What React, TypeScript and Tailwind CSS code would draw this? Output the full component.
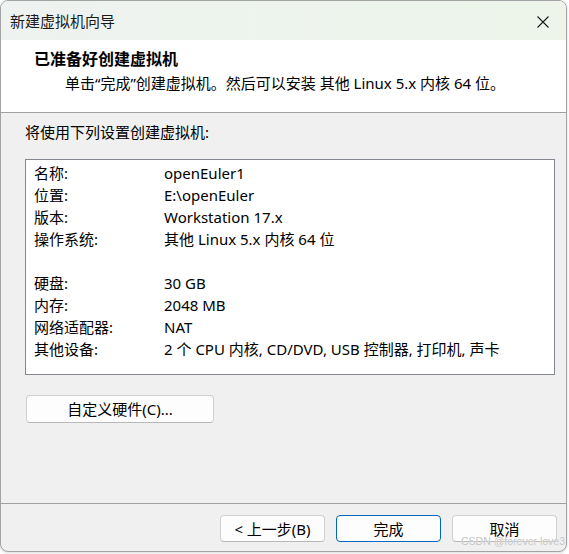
import React from "react";

const font = { fontFamily: '"Noto Sans", "Noto Sans CJK SC", sans-serif' };

const rows: [string, string][] = [
  ["名称:", "openEuler1"],
  ["位置:", "E:\\openEuler"],
  ["版本:", "Workstation 17.x"],
  ["操作系统:", "其他 Linux 5.x 内核 64 位"],
  ["", ""],
  ["硬盘:", "30 GB"],
  ["内存:", "2048 MB"],
  ["网络适配器:", "NAT"],
  ["其他设备:", "2 个 CPU 内核, CD/DVD, USB 控制器, 打印机, 声卡"],
];

export default function App() {
  return (
    <div className="w-[569px] h-[554px] bg-white relative" style={font}>
      <div className="w-[567px] h-[552px] rounded-[8px] border border-[#a3a3a3] overflow-hidden flex flex-col bg-[#f0f0f0] shadow-[0_1px_3px_rgba(0,0,0,0.15)] text-[15px] text-black">
        {/* Title bar */}
        <div className="h-[39px] shrink-0 flex items-center justify-between pl-[9px] pr-[17px] bg-gradient-to-r from-[#eef2f0] to-[#edf5ea]">
          <span className="leading-[20px] text-[15px] text-[#1a1a1a]">新建虚拟机向导</span>
          <svg width="12" height="12" viewBox="0 0 12 12" className="mt-[2px]">
            <path d="M0.5 0.5 L11.5 11.5 M11.5 0.5 L0.5 11.5" stroke="#1a1a1a" strokeWidth="1.1" />
          </svg>
        </div>
        {/* Header */}
        <div className="h-[73px] shrink-0 bg-white border-b border-[#a0a0a0] pt-[9px] pl-[33px]">
          <div className="font-bold leading-[20px] text-[16px]">已准备好创建虚拟机</div>
          <div className="leading-[20px] mt-[4px] pl-[31px]">
            单击“完成”创建虚拟机。然后可以安装 其他 Linux 5.x 内核 64 位。
          </div>
        </div>
        {/* Body */}
        <div className="flex-1 flex flex-col pl-[24px] pt-[9px]">
          <div className="leading-[20px]">将使用下列设置创建虚拟机:</div>
          <div className="mt-[17px] w-[530px] h-[216px] bg-white border border-[#828790] pt-[2px] pl-[8px]">
            {rows.map(([k, v], i) => (
              <div key={i} className="flex h-[22px] items-center leading-[22px]">
                <span className="w-[130px] shrink-0">{k}</span>
                <span>{v}</span>
              </div>
            ))}
          </div>
          <button className="mt-[20px] ml-[1px] w-[188px] h-[28px] rounded-[4px] border border-[#d0d0d0] border-b-[#b8b8b8] bg-[#fdfdfd] text-[15px] leading-[20px] flex items-center justify-center">
            自定义硬件(C)...
          </button>
        </div>
        {/* Footer */}
        <div className="h-[48px] shrink-0 border-t border-[#a0a0a0] flex justify-end items-start gap-[11px] pt-[11px] pr-[9px]">
          <button className="w-[105px] h-[27px] rounded-[4px] border border-[#d0d0d0] border-b-[#b8b8b8] bg-[#fdfdfd] flex items-center justify-center leading-[20px]">
            &lt; 上一步(B)
          </button>
          <button className="w-[105px] h-[27px] rounded-[4px] border border-[#0067c0] bg-[#fdfdfd] flex items-center justify-center leading-[20px]">
            完成
          </button>
          <button className="w-[105px] h-[27px] rounded-[4px] border border-[#d0d0d0] border-b-[#b8b8b8] bg-[#fdfdfd] flex items-center justify-center leading-[20px]">
            取消
          </button>
        </div>
      </div>
      <div
        className="absolute right-[4px] bottom-[6px] text-[10.5px] leading-[13px] text-[#c4c4c4]"
        style={{ fontFamily: '"Liberation Sans", "Noto Sans CJK SC", sans-serif', textShadow: "0 0 1px #fff" }}
      >
        CSDN @forever love3
      </div>
    </div>
  );
}
